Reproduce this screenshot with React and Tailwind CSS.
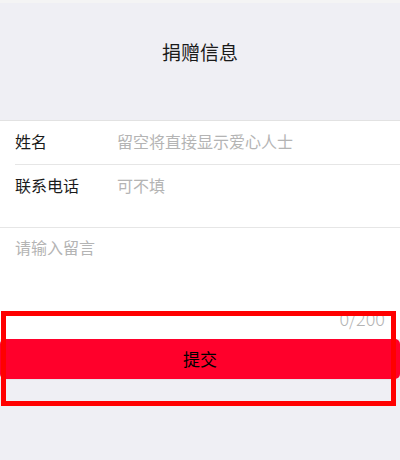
export default function App() {
  return (
    <div
      className="relative w-[400px] h-[460px] bg-[#efeff4] overflow-hidden"
      style={{ fontFamily: '"Noto Sans CJK SC", "Noto Sans", sans-serif' }}
    >
      <div className="h-[3px] bg-[#f4f4f4]" />
      <div className="h-[117px] flex justify-center pt-[36px]">
        <div className="text-[19px] leading-[26px] text-[#1a1a1a]">捐赠信息</div>
      </div>
      <div className="h-px bg-[#e2e2e2]" />
      <div className="bg-white">
        <div className="h-[43px] flex items-center px-[15px] pb-[3px]">
          <div className="w-[102px] text-[16px] text-[#1a1a1a]">姓名</div>
          <div className="text-[16px] text-[#b4b4b4]">留空将直接显示爱心人士</div>
        </div>
        <div className="ml-[15px] h-px bg-[#e6e6e6]" />
        <div className="h-[43px] flex items-center px-[15px] pb-[3px]">
          <div className="w-[102px] text-[16px] text-[#1a1a1a]">联系电话</div>
          <div className="text-[16px] text-[#b4b4b4]">可不填</div>
        </div>
        <div className="h-[19px]" />
        <div className="h-px bg-[#e6e6e6]" />
        <div className="h-[111px] flex flex-col justify-between px-[15px] pt-[8px] pb-[10px]">
          <div className="text-[16px] leading-[22px] text-[#b4b4b4]">请输入留言</div>
          <div className="self-end text-[18px] leading-[22px] text-[#b4b4b4] font-light">0/200</div>
        </div>
      </div>
      <div className="h-[40px] bg-[#ff002b] rounded-[5px] flex items-center justify-center">
        <span className="text-[17px] text-black">提交</span>
      </div>
      <div className="h-px bg-[#e4e4e8]" />
      <div className="absolute left-[1px] top-[311px] w-[395px] h-[95px] border-[5px] border-[#ff0000]" />
    </div>
  );
}
